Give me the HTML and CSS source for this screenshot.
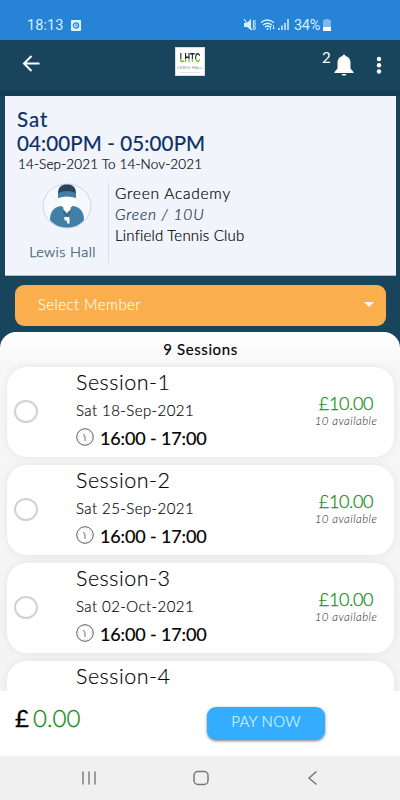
FILE: index.html
```html
<!DOCTYPE html>
<html lang="en">
<head>
<meta charset="utf-8">
<title>Sessions</title>
<link rel="stylesheet" href="styles.css">
</head>
<body>
<div class="status">
  <span class="clock">18:13</span>
  <svg class="rec" width="10" height="11" viewBox="0 0 10 11"><rect width="10" height="11" rx="1" fill="#e2f5ff"/><circle cx="5" cy="5.5" r="2.6" fill="none" stroke="#2783d6" stroke-width="1.3"/><path d="M5 4v2h1.5" fill="none" stroke="#2783d6"/></svg>
  <svg class="sysicons" width="47" height="14" viewBox="0 0 47 14" fill="none" stroke="#d3f1ff" stroke-width="1.2">
    <path d="M1 5h3l4-4v11L4 9H1z" fill="#d3f1ff" stroke="none"/><path d="M1 1l8 11"/><path d="M10 2l1 2-1 2 1 2-1 2 1 2M12.500 2l-1 2 1 2-1 2 1 2-1 2" stroke-width="1"/>
    <path d="M18 4.500q6-5 13 0M20 7q4.500-3.500 9 0M22 9q2.500-2 5 0" stroke-width="1.400"/><circle cx="24.500" cy="11" r="1" fill="#d3f1ff" stroke="none"/><path d="M27.500 12V8m-1 1 1-1 1 1M30.500 7v4m-1-1 1 1 1-1" stroke-width=".9"/>
    <path d="M36 12v-2M39 12V7.500M42 12V5M45 12V1" stroke-width="1.500"/>
  </svg>
  <span class="pct">34%</span>
  <svg class="battery" width="8" height="12" viewBox="0 0 8 12"><path d="M2 0h4v1h2v11H0V1h2z" fill="#7fb6ec"/><path d="M0 8h8v4H0z" fill="#fff"/></svg>
</div>
<header class="header">
  <svg class="back" width="18" height="17" viewBox="0 0 18 17" fill="none" stroke="#fff" stroke-width="2"><path d="M17.500 8.500H2M9.500 1 2 8.500 9.500 16"/></svg>
  <div class="logo"><div class="logo-name">LHTC</div><div class="logo-sub">LEWIS HALL</div><div class="logo-line">TENNIS COACHING</div></div>
  <span class="count">2</span>
  <svg class="bell" width="20" height="22" viewBox="0 0 20 22" fill="#fff"><path d="M8.500 2a1.500 1.500 0 0 1 3 0c3.500 1 5 3.500 5 7v5.500L19.500 18v1H.5v-1l3-3.500V9c0-3.500 1.500-6 5-7zM7.500 20h5q-.5 1.800-2.500 1.800T7.500 20z"/></svg>
  <svg class="dots" width="6" height="18" viewBox="0 0 6 18" fill="#fff"><circle cx="3" cy="3" r="2.200"/><circle cx="3" cy="9.300" r="2.200"/><circle cx="3" cy="15.500" r="2.200"/></svg>
</header>
<section class="info">
  <div class="when day">Sat</div>
  <div class="when hours">04:00PM - 05:00PM</div>
  <div class="range">14-Sep-2021 To 14-Nov-2021</div>
  <div class="details">
    <div class="coach">
      <svg width="50" height="46" viewBox="0 0 50 46"><ellipse cx="25" cy="23" rx="24" ry="22" fill="#f5f8fd" stroke="#cdd3e3"/><path d="M8 37c0-9 5-14 12-14h10c7 0 12 5 12 14-4 5-10 7.500-17 7.500S12 42 8 37z" fill="#427fa6"/><path d="M17.500 11h15v6c0 4-2.500 7-4.500 8l1 1-4 4-4-4 1-1c-2-1-4.500-4-4.500-8z" fill="#fff"/><path d="M16 11c0-7 3-9.500 9-9.500S34 4 34 11z" fill="#29435d"/><path d="M16 10q9-4 18 0v5q-9-3-18 0z" fill="#427fa6"/><path d="M21 28l4 6 3-6" fill="none" stroke="#29435d" stroke-width=".8"/><path d="M22 34.500q3-1.500 5.500 0v6H25V38q-3-.5-3-3.500z" fill="#fff"/></svg>
      <div class="coach-name">Lewis Hall</div>
    </div>
    <div class="venue">
      <div class="v1">Green Academy</div>
      <div class="v2">Green / 10U</div>
      <div class="v3">Linfield Tennis Club</div>
    </div>
  </div>
</section>
<div class="select"><span>Select Member</span><i class="caret"></i></div>
<main class="sheet">
  <h2>9 Sessions</h2>
  <article class="session"><span class="radio"></span><div class="text"><div class="name">Session-1</div><div class="date">Sat 18-Sep-2021</div><div class="time"><svg width="18" height="18" viewBox="0 0 18 18" fill="none" stroke="#333"><circle cx="9" cy="9" r="8.300" stroke-width=".8"/><circle cx="9" cy="9" r="6.500" stroke="#bbb" stroke-width=".7" stroke-dasharray="1 2.400"/><path d="M7.500 6 9 9v4" stroke-width=".7"/></svg><span>16:00 - 17:00</span></div></div><div class="cost"><div class="price">£10.00</div><div class="avail">10 available</div></div></article>
  <article class="session"><span class="radio"></span><div class="text"><div class="name">Session-2</div><div class="date">Sat 25-Sep-2021</div><div class="time"><svg width="18" height="18" viewBox="0 0 18 18" fill="none" stroke="#333"><circle cx="9" cy="9" r="8.300" stroke-width=".8"/><circle cx="9" cy="9" r="6.500" stroke="#bbb" stroke-width=".7" stroke-dasharray="1 2.400"/><path d="M7.500 6 9 9v4" stroke-width=".7"/></svg><span>16:00 - 17:00</span></div></div><div class="cost"><div class="price">£10.00</div><div class="avail">10 available</div></div></article>
  <article class="session"><span class="radio"></span><div class="text"><div class="name">Session-3</div><div class="date">Sat 02-Oct-2021</div><div class="time"><svg width="18" height="18" viewBox="0 0 18 18" fill="none" stroke="#333"><circle cx="9" cy="9" r="8.300" stroke-width=".8"/><circle cx="9" cy="9" r="6.500" stroke="#bbb" stroke-width=".7" stroke-dasharray="1 2.400"/><path d="M7.500 6 9 9v4" stroke-width=".7"/></svg><span>16:00 - 17:00</span></div></div><div class="cost"><div class="price">£10.00</div><div class="avail">10 available</div></div></article>
  <article class="session"><span class="radio"></span><div class="text"><div class="name">Session-4</div></div><div class="cost"><div class="price">£10.00</div></div></article>
</main>
<footer class="pay"><span class="pound">£</span><span class="total">0.00</span><button>PAY NOW</button></footer>
<nav class="nav">
  <svg width="16" height="16" viewBox="0 0 16 16" stroke="#777" stroke-width="1.400"><path d="M2 1.500v13M8 1.500v13M14 1.500v13"/></svg>
  <svg width="16" height="16" viewBox="0 0 16 16" fill="none" stroke="#777" stroke-width="1.500"><rect x="1" y="1.500" width="14" height="13" rx="4"/></svg>
  <svg width="16" height="16" viewBox="0 0 16 16" fill="none" stroke="#777" stroke-width="1.500"><path d="M11.500 1.500 4 8l7.500 6.500"/></svg>
</nav>
</body>
</html>
```

FILE: styles.css
```css
* { box-sizing: border-box; }
body { margin: 0; width: 400px; height: 800px; overflow: hidden; display: flex; flex-direction: column; background: #19455c; font-family: Lato, sans-serif; font-weight: 300; color: #000; white-space: nowrap; }
svg { display: block; flex: none; }
.status { flex: none; height: 40px; padding: 10px 0 0 27px; display: flex; align-items: center; background: #2783d6; color: #d3f1ff; font: 14.5px Roboto, sans-serif; }
.clock { width: 44px; letter-spacing: .1px; }
.sysicons { margin-left: 162px; }
.pct { width: 28px; margin: 0 1px 0 4px; font-size: 14.5px; letter-spacing: -.3px; }
.header { flex: none; height: 56px; display: flex; align-items: flex-start; padding-left: 22px; border-bottom: 5px solid #163c51; }
.back { margin-top: 15px; }
.logo { width: 30px; height: 29px; margin: 7px 0 0 135px; background: #fff; overflow: hidden; text-align: center; border: 1px solid #d5dde0; }
.logo-name { font: bold 12.5px/14px "Liberation Sans", sans-serif; transform: scaleX(.62); margin: 3px -6px 0; color: transparent; background: linear-gradient(#222 55%, #7cc01e 55%); background-clip: text; -webkit-background-clip: text; }
.logo-sub { font: 4px/4px Lato, sans-serif; color: #888; letter-spacing: .3px; margin-top: 1px; }
.logo-line { font: 2px/2px Lato, sans-serif; color: #aaa; margin-top: 1px; }
.count { color: #fff; font-size: 15px; font-weight: 400; line-height: 18px; margin: 8px 0 0 117px; width: 12px; }
.bell { margin-top: 14px; }
.dots { margin: 16px 0 0 22px; }
.info { flex: none; height: 180px; margin: 0 4px 0 5px; padding: 11px 12px 0; background: #f1f5fb; border-bottom: 1px solid #a9bcc7; }
.when { color: #0c2f66; font-size: 20.5px; font-weight: 400; line-height: 24px; -webkit-text-stroke: .2px #0c2f66; }
.day { letter-spacing: 1px; }
.hours { letter-spacing: .12px; }
.range { font-size: 13.5px; line-height: 18px; letter-spacing: .15px; padding-left: 1px; -webkit-text-stroke: .2px; }
.details { display: flex; margin-top: 10px; }
.coach { width: 92px; height: 80px; border-right: 1px solid #d9dfe8; display: flex; flex-direction: column; align-items: center; }
.coach svg { margin: 0 0 0 8px; }
.coach-name { color: #31566c; font-size: 14.5px; line-height: 20px; margin-top: 13px; letter-spacing: .4px; -webkit-text-stroke: .25px; }
.venue { padding-left: 6px; font-size: 15.5px; line-height: 21px; -webkit-text-stroke: .2px; }
.v1 { letter-spacing: .75px; }
.v2 { font-style: italic; color: #17374e; letter-spacing: .85px; }
.v3 { font-size: 15px; line-height: 21px; letter-spacing: .2px; }
.select { flex: none; height: 41px; margin: 9px 14px 0 15px; padding: 0 12px 3px 23px; border-radius: 9px; background: #fbae4e; color: #fff8dc; display: flex; align-items: center; justify-content: space-between; font-size: 14.8px; letter-spacing: .5px; -webkit-text-stroke: .25px; }
.caret { border: 5px solid transparent; border-top-color: #fff; border-bottom: 0; }
.sheet { flex: 1; min-height: 0; margin-top: 6px; padding: 0 6px 0 7px; overflow: hidden; background: linear-gradient(#fff 0, #f7f7f7 34px, #f4f4f4 100%); border-radius: 16px 16px 0 0; }
h2 { margin: 0; height: 35px; font-size: 15px; line-height: 34px; font-weight: 400; letter-spacing: .6px; text-align: center; color: #000; -webkit-text-stroke: .15px #000; }
.session { height: 90px; margin-bottom: 8px; border-radius: 20px; background: #fff; box-shadow: 0 0 9px #00000014; display: flex; align-items: flex-start; }
.radio { flex: none; width: 24px; height: 23px; margin: 33px 0 0 7px; border: 2px solid #d2d2d2; border-radius: 50%; }
.text { flex: none; width: 220px; padding-left: 38px; }
.name { font-size: 21.5px; line-height: 26px; padding-top: 2px; letter-spacing: .5px; -webkit-text-stroke: .15px; }
.date { font-size: 15px; line-height: 20px; padding-top: 5px; height: 30px; letter-spacing: .43px; -webkit-text-stroke: .15px; }
.time { display: flex; align-items: center; gap: 6px; height: 26px; font-size: 18px; font-weight: 400; letter-spacing: -.15px; color: #000; -webkit-text-stroke: .2px #000; }
.time svg { margin-bottom: 3px; }
.cost { flex: 1; padding: 25px 0 0 36px; text-align: center; margin-left: 8px; margin-right: 4px; }
.price { color: #128c15; font-size: 18px; line-height: 22px; letter-spacing: -.35px; -webkit-text-stroke: .25px; }
.avail { color: #222; font-size: 11.5px; line-height: 14px; font-style: italic; letter-spacing: .45px; }
.pay { flex: none; height: 65px; display: flex; align-items: flex-start; padding-left: 15px; background: #fff; }
.pound, .total { font-size: 24px; line-height: 32px; padding-top: 11px; }
.pound { width: 18px; font-weight: 400; color: #000; -webkit-text-stroke: .3px #000; }
.total { width: 174px; color: #128c15; -webkit-text-stroke: .3px; }
button { width: 118px; height: 33px; margin: 16px 0 0; padding: 0 0 5px; border: 0; border-radius: 9px; background: #34acff; box-shadow: 0 1px 3px #00000080; color: #d5f7ff; font: 300 15px Lato, sans-serif; letter-spacing: .25px; -webkit-text-stroke: .2px; }
.nav { flex: none; height: 44px; background: #f0f0f0; display: flex; align-items: center; gap: 96px; padding-left: 81px; }
```
